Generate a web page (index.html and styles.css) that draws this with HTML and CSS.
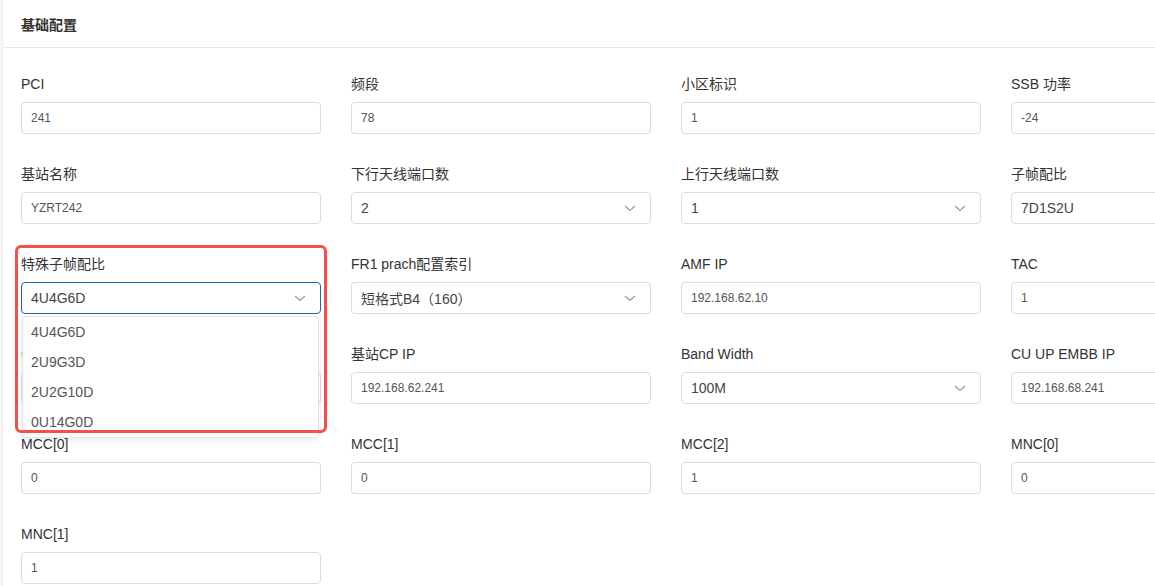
FILE: index.html
```html
<!DOCTYPE html>
<html lang="zh">
<head>
<meta charset="utf-8">
<title>基础配置</title>
<link rel="stylesheet" href="styles.css">
</head>
<body>
<div class="card">
  <div class="card-header">基础配置</div>
  <div class="form">
    <div class="field"><div class="label">PCI</div><div class="input">241</div></div>
    <div class="field"><div class="label">频段</div><div class="input">78</div></div>
    <div class="field"><div class="label">小区标识</div><div class="input">1</div></div>
    <div class="field"><div class="label">SSB 功率</div><div class="input">-24</div></div>

    <div class="field"><div class="label">基站名称</div><div class="input">YZRT242</div></div>
    <div class="field"><div class="label">下行天线端口数</div><div class="select"><span>2</span><svg class="chev" viewBox="0 0 12 7"><path d="M1 1l5 4.5L11 1"/></svg></div></div>
    <div class="field"><div class="label">上行天线端口数</div><div class="select"><span>1</span><svg class="chev" viewBox="0 0 12 7"><path d="M1 1l5 4.5L11 1"/></svg></div></div>
    <div class="field"><div class="label">子帧配比</div><div class="select"><span>7D1S2U</span><svg class="chev" viewBox="0 0 12 7"><path d="M1 1l5 4.5L11 1"/></svg></div></div>

    <div class="field open">
      <div class="label">特殊子帧配比</div>
      <div class="select focus"><span>4U4G6D</span><svg class="chev" viewBox="0 0 12 7"><path d="M1 1l5 4.5L11 1"/></svg></div>
      <div class="menu">
        <div class="option">4U4G6D</div>
        <div class="option">2U9G3D</div>
        <div class="option">2U2G10D</div>
        <div class="option">0U14G0D</div>
        <div class="option">3U8G3D</div>
      </div>
      <div class="highlight"></div>
    </div>
    <div class="field"><div class="label">FR1 prach配置索引</div><div class="select"><span>短格式B4（160）</span><svg class="chev" viewBox="0 0 12 7"><path d="M1 1l5 4.5L11 1"/></svg></div></div>
    <div class="field"><div class="label">AMF IP</div><div class="input">192.168.62.10</div></div>
    <div class="field"><div class="label">TAC</div><div class="input">1</div></div>

    <div class="field"><div class="label">CU CP IP</div><div class="input">192.168.62.242</div></div>
    <div class="field"><div class="label">基站CP IP</div><div class="input">192.168.62.241</div></div>
    <div class="field"><div class="label">Band Width</div><div class="select"><span>100M</span><svg class="chev" viewBox="0 0 12 7"><path d="M1 1l5 4.5L11 1"/></svg></div></div>
    <div class="field"><div class="label">CU UP EMBB IP</div><div class="input">192.168.68.241</div></div>

    <div class="field"><div class="label">MCC[0]</div><div class="input">0</div></div>
    <div class="field"><div class="label">MCC[1]</div><div class="input">0</div></div>
    <div class="field"><div class="label">MCC[2]</div><div class="input">1</div></div>
    <div class="field"><div class="label">MNC[0]</div><div class="input">0</div></div>

    <div class="field"><div class="label">MNC[1]</div><div class="input">1</div></div>
  </div>
</div>
</body>
</html>
```
FILE: styles.css
```css
html, body {
  margin: 0;
  padding: 0;
  background: #f7f7f8;
  overflow: hidden;
  height: 586px;
}
body {
  font-family: "Liberation Sans", Arial, "Noto Sans CJK SC", sans-serif;
  color: #333;
}
.card {
  margin-left: 2px;
  width: 1340px;
  height: 600px;
  background: #fff;
  border-left: 1px solid #efeff2;
}
.card-header {
  height: 47px;
  line-height: 50px;
  padding-left: 18px;
  font-size: 14px;
  font-weight: bold;
  color: #333;
  border-bottom: 1px solid #e9e9ee;
}
.form {
  display: grid;
  grid-template-columns: repeat(4, 300px);
  column-gap: 30px;
  row-gap: 30px;
  padding: 26px 0 0 18px;
}
.field {
  position: relative;
}
.label {
  font-size: 14px;
  line-height: 20px;
  height: 20px;
  margin-bottom: 8px;
  color: #333;
  white-space: nowrap;
}
.input, .select {
  box-sizing: border-box;
  height: 32px;
  border: 1px solid #dcdcdf;
  border-radius: 4px;
  padding: 0 9px;
  display: flex;
  align-items: center;
  background: #fff;
}
.input {
  font-size: 12px;
  color: #555;
}
.select {
  font-size: 14px;
  color: #444;
  justify-content: space-between;
  padding-right: 14px;
}
.select.focus {
  border-color: #1f64a6;
}
.chev {
  width: 12px;
  height: 7px;
  fill: none;
  stroke: #9a9a9a;
  stroke-width: 1.3;
}
.menu {
  position: absolute;
  left: 1px;
  top: 62px;
  width: 297px;
  height: 122px;
  padding-top: 1px;
  overflow: hidden;
  box-sizing: border-box;
  background: #fff;
  border: 1px solid #e2e2e6;
  border-radius: 4px;
  box-shadow: 0 2px 6px rgba(0, 0, 0, 0.08);
  z-index: 5;
}
.option {
  height: 30px;
  line-height: 28px;
  padding-left: 8px;
  font-size: 14px;
  color: #555;
}
.highlight {
  position: absolute;
  left: -6px;
  top: -9px;
  width: 306px;
  height: 182px;
  border: 3px solid #f2504b;
  border-radius: 6px;
  z-index: 6;
  pointer-events: none;
}
```
